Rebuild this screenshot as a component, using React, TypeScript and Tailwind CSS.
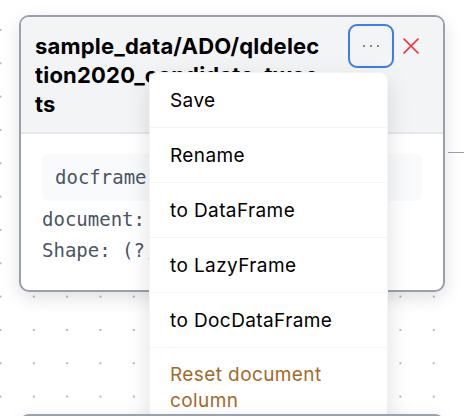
import React from "react";

const menuItems = ["Save", "Rename", "to DataFrame", "to LazyFrame", "to DocDataFrame"];

function Dots() {
  return (
    <svg width="20" height="6" viewBox="0 0 20 6" className="text-gray-500">
      <circle cx="3" cy="3" r="1.1" fill="currentColor" />
      <circle cx="10" cy="3" r="1.1" fill="currentColor" />
      <circle cx="17" cy="3" r="1.1" fill="currentColor" />
    </svg>
  );
}

function CloseIcon() {
  return (
    <svg width="16" height="16" viewBox="0 0 16 16" className="text-red-500">
      <path d="M1 1L15 15M15 1L1 15" stroke="currentColor" strokeWidth="1.7" strokeLinecap="round" />
    </svg>
  );
}

function NodeMenu() {
  return (
    <div className="absolute left-[130px] top-[57px] z-20 w-[239px] overflow-hidden rounded-lg border border-gray-100 bg-white shadow-[0_8px_24px_rgba(0,0,0,0.12)]">
      {menuItems.map((item) => (
        <div
          key={item}
          className="border-b border-gray-100 px-5 py-[13.5px] text-[19px] leading-[27px] tracking-[0.4px] text-black"
        >
          {item}
        </div>
      ))}
      <div className="px-5 py-[13.5px] text-[19px] leading-[26px] tracking-[0.4px] text-[#a36a2a]">
        Reset document column
      </div>
    </div>
  );
}

export default function App() {
  return (
    <div
      className="relative h-[416px] w-[464px] overflow-hidden bg-white bg-[radial-gradient(circle,#b4b8bf_0.8px,transparent_1.2px)] bg-[length:33.33px_33.33px] bg-[position:-16.2px_13.3px]"
      style={{ fontFamily: "Inter, 'Noto Sans', sans-serif" }}
    >
      {/* edge stub */}
      <div className="absolute left-[448px] top-[152px] h-px w-[16px] bg-gray-400" />

      <div className="absolute left-[19px] top-[15px] z-10 w-[426px]">
        <div className="relative flex h-[277px] flex-col overflow-hidden rounded-[10px] border-2 border-gray-400 bg-white shadow-[0_6px_18px_rgba(0,0,0,0.12)]">
          <div className="flex items-start border-b-2 border-gray-200 bg-gray-100 pb-[13px] pl-[14px] pr-[22px] pt-[7px]">
            <h2 className="w-[304px] whitespace-nowrap pt-[8px] text-[22px] font-bold leading-[29px] tracking-[0.2px] text-black">
              sample_data/ADO/qldelec
              <br />
              tion2020_candidate_twee
              <br />
              ts
            </h2>
            <div className="ml-[9px] flex items-center gap-[9px]">
              <button className="grid h-[44px] w-[46px] place-items-center rounded-[9px] border-2 border-[#3b7cf5] bg-gray-100">
                <Dots />
              </button>
              <CloseIcon />
            </div>
          </div>
          <div
            className="flex flex-col px-[21px] pt-[20px] text-[19px] text-gray-600"
            style={{ fontFamily: "'DejaVu Sans Mono', 'Liberation Mono', monospace" }}
          >
            <div className="rounded-md bg-gray-50 px-[13px] py-[9px] leading-[29px] text-gray-600">docframe</div>
            <div className="mt-[3px] leading-[31px]">document: text</div>
            <div className="leading-[31px]">Shape: (?, ?)</div>
          </div>
        </div>
        <NodeMenu />
      </div>

      {/* next node peeking in at the bottom */}
      <div className="absolute left-[19px] top-[414px] z-30 h-[60px] w-[426px] rounded-[10px] border-2 border-gray-400 bg-white shadow-[0_6px_18px_rgba(0,0,0,0.12)]" />
    </div>
  );
}
